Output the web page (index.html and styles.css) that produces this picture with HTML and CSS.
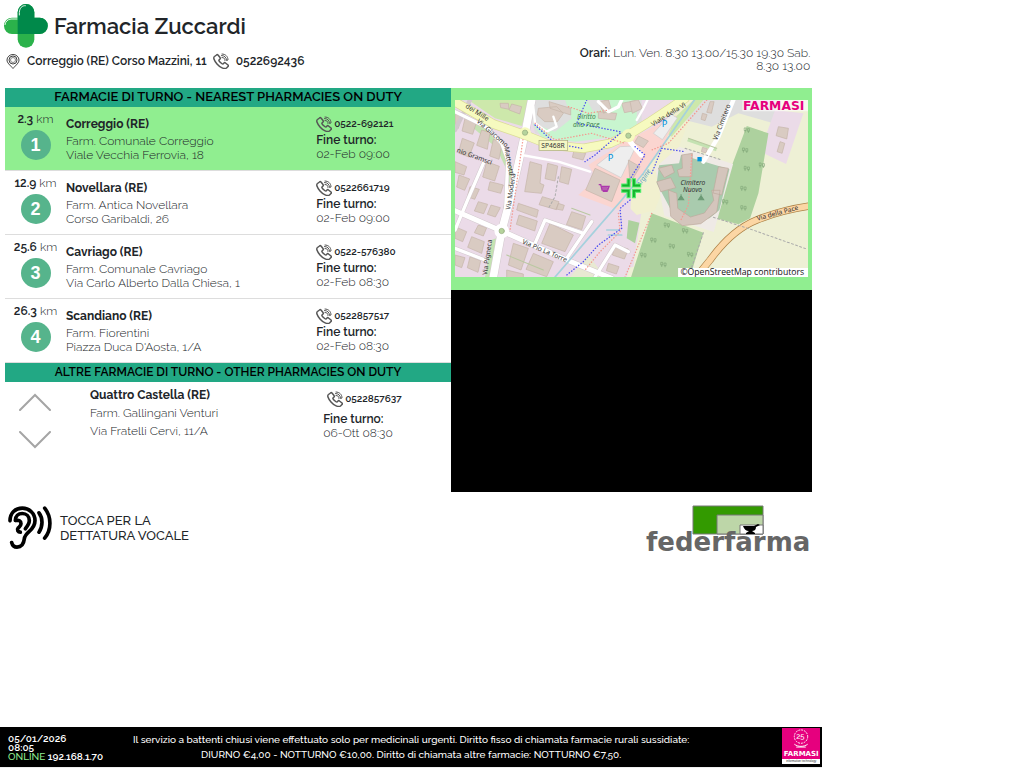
FILE: index.html
```html
<!DOCTYPE html>
<html lang="it">
<head>
<meta charset="utf-8">
<meta name="viewport" content="width=device-width, initial-scale=1">
<title>Farmacia Zuccardi</title>
<link rel="stylesheet" href="styles.css">
</head>
<body>
<svg class="defs" aria-hidden="true">
  <symbol id="phone" viewBox="0 0 32 32">
    <g fill="none" stroke="currentColor" stroke-width="3" stroke-linejoin="round" stroke-linecap="round">
      <path d="M7 4c1-1 2-1 3 0l4 5c1 1 1 2 0 3l-2 2c-1 1 1 3 3 5s4 4 5 3l2-2c1-1 2-1 3 0l5 4c1 1 1 2 0 3l-3 3c-4 3-13-1-19-8S0 9 3 7z"/>
      <path d="M18 2c7 0 12 5 12 12l-3 1c0-6-4-10-10-10M18 9c4 0 6 2 6 6" stroke-width="2"/>
    </g>
  </symbol>
  <symbol id="tree" viewBox="0 0 22 20">
    <path d="M5 18V10M2 12V4h6v8zM15 19v-7M12 14V6h6v8z" fill="none" stroke="#82a878" stroke-width="2"/>
  </symbol>
</svg>

<div class="screen">
  <header class="top">
    <div class="identity">
      <div class="brand">
        <svg class="brand-logo" viewBox="0 0 132 132" aria-hidden="true">
          <rect x="41" y="0" width="50" height="131" rx="25" fill="#2bb24b"/>
          <rect x="0" y="41" width="131" height="49" rx="24" fill="#2bb24b"/>
          <path d="M41 90V25a25 25 0 0 1 50 0v16h16a24 24 0 0 1 0 49z" fill="#00894a"/>
          <path d="M46 33V25C47 12 54 4 64 5M3 62c1-9 8-16 18-17h18" fill="none" stroke="#e9f7ec" stroke-width="3" stroke-linecap="round"/>
        </svg>
        <h1 class="brand-name">Farmacia Zuccardi</h1>
      </div>
      <div class="contact">
        <svg class="pin" viewBox="0 0 28 30" aria-hidden="true">
          <g fill="none" stroke="#444" stroke-width="2">
            <path d="M14 29C8 22 2 18 2 12a12 11 0 0 1 24 0c0 6-6 10-12 17z"/>
            <circle cx="14" cy="12" r="8"/><circle cx="14" cy="12" r="5" stroke="#888"/>
          </g>
        </svg>
        <span class="address">Correggio (RE) Corso Mazzini, 11</span>
        <svg class="contact-phone" aria-hidden="true"><use href="#phone"/></svg>
        <span>0522692436</span>
      </div>
    </div>
    <p class="hours"><b>Orari:</b> Lun. Ven. 8.30 13.00/15.30 19.30 Sab. 8.30 13.00</p>
  </header>

  <main class="board">
    <section class="duty">
      <h2 class="bar bar-main">FARMACIE DI TURNO - NEAREST PHARMACIES ON DUTY</h2>
      <ul class="list">
        <li class="row row-active">
          <div class="distance"><span><b>2.3</b> km</span><span class="badge">1</span></div>
          <div class="place"><h3>Correggio (RE)</h3><p>Farm. Comunale Correggio</p><p>Viale Vecchia Ferrovia, 18</p></div>
          <div class="shift"><div class="tel"><svg aria-hidden="true"><use href="#phone"/></svg>0522-692121</div><b>Fine turno:</b><p>02-Feb 09:00</p></div>
        </li>
        <li class="row">
          <div class="distance"><span><b>12.9</b> km</span><span class="badge">2</span></div>
          <div class="place"><h3>Novellara (RE)</h3><p>Farm. Antica Novellara</p><p>Corso Garibaldi, 26</p></div>
          <div class="shift"><div class="tel"><svg aria-hidden="true"><use href="#phone"/></svg>0522661719</div><b>Fine turno:</b><p>02-Feb 09:00</p></div>
        </li>
        <li class="row">
          <div class="distance"><span><b>25.6</b> km</span><span class="badge">3</span></div>
          <div class="place"><h3>Cavriago (RE)</h3><p>Farm. Comunale Cavriago</p><p>Via Carlo Alberto Dalla Chiesa, 1</p></div>
          <div class="shift"><div class="tel"><svg aria-hidden="true"><use href="#phone"/></svg>0522-576380</div><b>Fine turno:</b><p>02-Feb 08:30</p></div>
        </li>
        <li class="row">
          <div class="distance"><span><b>26.3</b> km</span><span class="badge">4</span></div>
          <div class="place"><h3>Scandiano (RE)</h3><p>Farm. Fiorentini</p><p>Piazza Duca D'Aosta, 1/A</p></div>
          <div class="shift"><div class="tel"><svg aria-hidden="true"><use href="#phone"/></svg>0522857517</div><b>Fine turno:</b><p>02-Feb 08:30</p></div>
        </li>
      </ul>
      <h2 class="bar">ALTRE FARMACIE DI TURNO - OTHER PHARMACIES ON DUTY</h2>
      <div class="other">
        <div class="arrows">
          <button type="button" class="arrow" aria-label="Precedente"><svg viewBox="0 0 32 18" aria-hidden="true"><path d="M1 17L16 2l15 15"/></svg></button>
          <button type="button" class="arrow" aria-label="Successiva"><svg viewBox="0 0 32 18" aria-hidden="true"><path d="M1 1l15 15L31 1"/></svg></button>
        </div>
        <div class="other-place"><h3>Quattro Castella (RE)</h3><p>Farm. Gallingani Venturi</p><p>Via Fratelli Cervi, 11/A</p></div>
        <div class="other-shift"><div class="tel"><svg aria-hidden="true"><use href="#phone"/></svg>0522857637</div><b>Fine turno:</b><p>06-Ott 08:30</p></div>
      </div>
    </section>

    <section class="media">
      <div class="map-panel">
        <svg class="map" viewBox="0 0 1059 531" preserveAspectRatio="xMidYMid slice" role="img" aria-label="Mappa">
          <rect width="1059" height="531" fill="#ebdbe8"/>
          <path d="M755 0H1059V531H420L535 500 560 330 590 200 640 130z" fill="#eef0d5"/>
          <path d="M725 0H675L530 265 525 350 600 330z" fill="#f1f0cf"/>
          <path d="M520 320L545 345 532 480 515 531H300L400 440z" fill="#ebdbe8"/>
          <path d="M345 531L400 465 450 531z" fill="#e8e9d2"/>
          <path d="M730 0H965L955 70 850 40 770 80 680 58z" fill="#dedede"/>
          <path d="M960 30L1045 40 993 192 915 155z" fill="#ebdbe8"/>
          <path d="M0 0H560V80L400 120 240 100 225 30z" fill="#dedede"/>
          <path d="M40 0H225L200 78 120 55z" fill="#cde8ab"/>
          <path d="M330 0H545V80L470 112 360 125 260 112 232 70 300 95 350 55z" fill="#c8f5cf"/>
          <path d="M395 0h70v25l-50 10z" fill="#dedede"/>
          <path d="M620 90L715 0H745L650 110z" fill="#cde8ab"/>
          <path d="M400 195L500 130 665 45 620 150 530 260 490 330 370 285 425 235z" fill="#fbd5d0"/>
          <path d="M425 195l70-55 48-2-45 95zM595 100l52-58 20 12-45 65z" fill="#eee" stroke="#ccc" stroke-width="2"/>
          <path d="M875 78L940 100 910 280 885 355 850 373 772 352zM590 340L745 398 705 531H528zM520 360l33 8-13 62-25-15z" fill="#add19e"/>
          <g fill="#c4e2b2"><path d="M70 65l65 55 35 80-5 75-14-2 3-65-30-65-70-60zM150 285l14 3-6 70-15-10zM110 420l13-5-18 116H90zM700 115l85 30-2 9-87-30z"/></g>

          <path d="M672 140l162 52-58 204-148-48-28-145z" fill="#efeae6"/>
          <path d="M612 196l60-6 6-26 145 44-30 122-30 25-78 10-40-40-40-75z" fill="#a9cbae"/>
          <g fill="#d4c5bc" stroke="#bda99b" stroke-width="2">
            <path d="M680 165l32-5-2 70-38 0-5-20 15-5zM610 205l40-10 8 22-30 16zM605 245l42-12 15 30-45 12zM790 200l30 5-20 80-26-6zM640 270l25 10 3 45 38 26 42-12 28-38-6-30h25l-10 65-48 35-55 6-35-28z"/>
          </g>

          <g fill="#d9cbc2" stroke="#c4b3a8" stroke-width="2">
            <path d="M0 40l20 5-10 40H0zM30 55l35 10-12 38-32-10zM22 115l36 14-16 42-32-12zM80 90l25 8-8 50-32-12zM115 118l27 10-10 50-28-10zM0 185l35 15-8 25-27-8zM12 225l32 12-15 34-24-10zM95 185l38 14-14 44-36-12zM45 260l28 8-14 30-22-8zM105 245l40 10-8 25-38-10z"/>
            <path d="M135 10l25 0 2 18-25-5zM170 12l30 8-6 22-32-12zM250 25l55-5 20 20-18 25-38 0-22-20zM282 5l65 20 0 20-62-20zM430 5l30-5 8 25-22 15zM430 35l55 5-5 20-50-5zM500 10l40-8v30l-32 6z"/>
            <path d="M225 185l35 10-5 55 12 5-8 25-50-5zM278 190l30 8-8 45-30-7zM320 200l30 8-10 45-27-8zM357 150l35 10-8 20-32-8zM420 205l75 35-25 65-78-35zM538 128l12-20 30 15-15 20zM520 180l35 20-30 50z"/>
            <path d="M70 305l28 8-12 28-28-8zM108 315l28 8-15 28-24-8zM0 380l35 15-12 30-23-10zM50 410l38 15-8 35-42-18zM70 375l25 8-10 25-27-10zM0 465l30 8-10 30-20-8zM45 470l32 12-8 35-32-14z"/>
            <path d="M190 310l60 20-5 22-60-22zM192 345l55 18-8 30-55-20zM175 430l45 15-22 65-38-15zM285 370l70 35-25 50-70-25zM350 335l42 14-12 40-46-15zM235 460l60 25-20 45-62-22zM310 310l18 6-5 15-20-4zM155 510l50 12v12h-50zM262 290l50 15-8 24-52-15z"/>
            <path d="M525 5l25-5 12 25-30 15zM765 5l12 0-8 35-14-3zM742 40l14 4-6 18-12-4zM970 80l30 5-5 32-32-10zM975 125l14 5-8 30-15-5zM480 435l40 12-12 30-36-12zM460 490l32 10-8 22-30-10zM742 142l15 4-4 13-14-4z"/>
          </g>

          <g fill="none" stroke-linecap="round" stroke-linejoin="round">
            <g stroke="#d2c8cd">
              <path stroke-width="26" d="M230 0L210 100 188 200 162 310 140 393 115 531"/>
              <path stroke-width="18" d="M-5 330L140 393 335 480 470 535"/>
              <path stroke-width="13" d="M0 35L95 82 140 130 158 180 152 330M85 190L42 290 0 390M240 430L270 360 385 400M410 365L335 475M0 445L90 480M45 0L0 90M420 531L480 435 520 455"/>
            </g>
            <g stroke="#fff">
              <path stroke-width="23" d="M230 0L210 100 188 200 162 310 140 393 115 531"/>
              <path stroke-width="15" d="M-5 330L140 393 335 480 470 535M525 125L558 165"/>
              <path stroke-width="10" d="M0 35L95 82 140 130 158 180 152 330M85 190L42 290 0 390M240 430L270 360 385 400M410 365L335 475M0 445L90 480M430 5l30 30 30-15 10-20M420 531L480 435 520 455"/>
              <path stroke-width="13" d="M835 0L790 110 745 185"/>
              <path stroke-width="7" d="M200 165L310 185 405 215M235 20l5 50 35 25 30-15-10-30M545 60l20-35 12-25"/>
            </g>
            <path stroke="#dadb96" stroke-width="28" d="M-5 3L115 72 210 105 285 135 385 145 465 130 520 105 585 65 690-5"/>
            <path stroke="#f6fabf" stroke-width="24" d="M-5 3L115 72 210 105 285 135 385 145 465 130 520 105 585 65 690-5"/>
            <path stroke="#ac8146" stroke-width="22" d="M720 535L765 480Q830 390 905 360T1065 318"/>
            <path stroke="#fcd6a4" stroke-width="18" d="M720 535L765 480Q830 390 905 360T1065 318"/>
            <path stroke="#a5d1dd" stroke-width="5" d="M718 0L645 105 565 220 500 300 400 415 300 531M455 390h35M460 405h40"/>
            <path stroke="#b9c8a0" stroke-width="3" d="M155 465l110 45M700 115l85 30M350 325l55 20"/>
            <g stroke="#f39a90" stroke-width="4" stroke-dasharray="1 8">
              <path d="M240 70l60 50 110-20 100 30M755 0L640 130 590 150M710 165l-10 150-25 50M490 340l5 55-60 60-45 55M590 340L510 531M205 110l-40 280M340 20l60 20 60-10"/>
            </g>
            <g stroke="#4a4cf0" stroke-width="4" stroke-dasharray="1 8">
              <path d="M240 75l60 55 80 15M395 0l-30 70 130 25M495 100l-75 65-30 20M540 140l30 25-50 80M590 220l30-75 70 10M525 300l-30 25 5 60-70 50-45 50-50 40"/>
            </g>
            <path stroke="#aaa" stroke-width="3" stroke-dasharray="6 7" d="M690 145l110 35M775 352l110 35 170 60M745 398l-45 133M310 230l-10 60-20 35"/>
            <circle cx="210" cy="100" r="18" fill="#f6fabf"/><circle cx="520" cy="107" r="20" fill="#f6fabf"/><circle cx="140" cy="393" r="22" fill="#fff"/>
            <g fill="#b5d39c" stroke="#96aa80" stroke-width="2"><circle cx="210" cy="98" r="8"/><circle cx="520" cy="107" r="8"/><circle cx="140" cy="393" r="8"/></g>
          </g>

          <g fill="none" stroke="#82a878">
            <use href="#tree" x="865" y="80" width="22" height="20"/><use href="#tree" x="860" y="140" width="22" height="20"/><use href="#tree" x="865" y="195" width="22" height="20"/><use href="#tree" x="910" y="185" width="22" height="20"/><use href="#tree" x="855" y="255" width="22" height="20"/><use href="#tree" x="800" y="295" width="22" height="20"/><use href="#tree" x="855" y="313" width="22" height="20"/><use href="#tree" x="625" y="365" width="22" height="20"/><use href="#tree" x="680" y="382" width="22" height="20"/><use href="#tree" x="585" y="410" width="22" height="20"/><use href="#tree" x="640" y="428" width="22" height="20"/><use href="#tree" x="695" y="453" width="22" height="20"/><use href="#tree" x="555" y="455" width="22" height="20"/><use href="#tree" x="615" y="483" width="22" height="20"/>
          </g>
          <path d="M678 293v-10M670 299h16l-8-12zM738 293v-10M730 299h16l-8-12z" stroke="#6b9a75" fill="#6b9a75" stroke-width="3"/>

          <g class="map-text">
            <text transform="translate(30 22) rotate(32)">dei Mille</text>
            <text transform="translate(64 66) rotate(41)">Via Giacomo</text>
            <text transform="translate(148 142) rotate(80)">Matteotti</text>
            <text transform="translate(4 156) rotate(20)">nio Gramsci</text>
            <text transform="translate(166 330) rotate(-82)">Via Modena</text>
            <text transform="translate(96 526) rotate(-82)">Via Pigneca</text>
            <text transform="translate(200 430) rotate(23)">Via Pio La Torre</text>
            <text transform="translate(594 80) rotate(-32)">Viale della Vi</text>
            <text transform="translate(786 122) rotate(-69)">Via Cimitero</text>
            <text transform="translate(907 362) rotate(-15)">Via della Pace</text>
            <g class="map-italic"><text x="366" y="56" fill="#3c8250">Diritto</text><text x="354" y="80" fill="#3c8250">alla Pace</text><text x="676" y="254">Cimitero</text><text x="684" y="276">Nuovo</text><text transform="translate(555 260) rotate(-55)" fill="#5b9cc4">Argine</text></g>
            <rect x="252" y="122" width="86" height="30" fill="#f5f7c4" stroke="#a9a97a" stroke-width="2"/>
            <text x="259" y="144">SP468R</text>
          </g>
          <g class="parking"><text x="458" y="182">P</text><text x="620" y="80">P</text></g>
          <path d="M727 171h13v13h-13z" fill="#0092da"/>
          <path d="M431 254h6l4 16h17l4-11h-22M440 264h18M443 274h15" stroke="#ac39ac" stroke-width="4" fill="none"/>

          <g fill="#16b22c" stroke="#4df06d" stroke-width="3">
            <path d="M516 236v16h-16v9h25v-25zM532 236v25h25v-9h-16v-16zM500 268v9h16v16h9v-25zM532 268v25h9v-16h16v-9z"/>
          </g>
          <path d="M862 0h197v34H862z" fill="#fff" fill-opacity=".6"/>
          <text class="map-brand" x="864" y="30">FARMASI</text>
          <path d="M669 504h390v27H669z" fill="#fff"/>
          <text class="map-credit" x="676" y="525">©OpenStreetMap contributors</text>
        </svg>
      </div>
      <div class="video"></div>
    </section>
  </main>

  <div class="tools">
    <button type="button" class="voice">
      <svg class="ear" viewBox="0 0 132 128" aria-hidden="true">
        <g fill="none" stroke="#000" stroke-width="11" stroke-linecap="round">
          <path d="M6 44C6 20 22 6 43 6s38 16 38 37c0 32-29 31-32 55-2 18-12 25-22 25-9 0-14-6-16-14"/>
          <path d="M22 43c0-14 9-21 21-21s21 9 21 21c0 10-5 16-12 25"/>
          <path d="M24 43c8-2 15 1 15 10 0 7-6 9-9 13-4 5 0 12 7 12"/>
          <path d="M93 20c12 16 12 40 0 58M110 6c21 26 21 64 0 90"/>
        </g>
      </svg>
      <span>TOCCA PER LA<br>DETTATURA VOCALE</span>
    </button>
    <div class="feder">
      <svg viewBox="0 0 72 30" aria-hidden="true">
        <path d="M1 1h70v28H1z" fill="#339a00" stroke="#777"/>
        <path d="M25 10h46v19H25z" fill="#bdd6a8" stroke="#777"/>
        <path d="M48 20h23v9H48z" fill="#fff" stroke="#777"/>
        <path d="M51 21h11l4-2 2 1-4 2c0 3-2 4-4 4l3 2v1h-9v-1l3-2c-3 0-5-2-6-5z"/>
      </svg>
      <span>federfarma</span>
    </div>
  </div>

  <footer class="footer">
    <div class="status"><div>05/01/2026</div><div>08:05</div><div><span class="online">ONLINE</span> 192.168.1.70</div></div>
    <p class="notice">Il servizio a battenti chiusi viene effettuato solo per medicinali urgenti. Diritto fisso di chiamata farmacie rurali sussidiate:<br>DIURNO €4,00 - NOTTURNO €10,00. Diritto di chiamata altre farmacie: NOTTURNO €7,50.</p>
    <div class="maker">
      <svg viewBox="0 0 38 22" aria-hidden="true"><g fill="none" stroke="#fff"><circle cx="19" cy="9" r="7" stroke-dasharray="2 1"/><path d="M12 17c4 3 10 3 14 0M14 20h10"/></g><text x="14" y="12" font-size="8" fill="#fff">25</text></svg>
      <strong>FARMASI</strong>
      <small>information technology</small>
    </div>
  </footer>
</div>
</body>
</html>
```
FILE: styles.css
```css
* { box-sizing: border-box; }
body, h1, h2, h3, p, ul { margin: 0; padding: 0; }
body { background: #fff; color: #212529; font-family: Raleway, Lato, sans-serif; font-size: 12px; line-height: 14px; }
b { font-weight: 600; color: #212529; }
button { border: 0; background: none; padding: 0; font: inherit; color: inherit; cursor: pointer; }
.defs { position: absolute; width: 0; height: 0; }

.screen { width: 80.3%; min-height: 100vh; display: flex; flex-direction: column; border-bottom: 1px solid #eee; }

.top { display: flex; justify-content: space-between; height: 88px; padding: 4px 12px 0 4px; }
.brand { display: flex; align-items: center; gap: 6px; }
.brand-logo { width: 44px; height: 44px; }
.brand-name { font-size: 22px; line-height: 32px; font-weight: 600; }
.contact { display: flex; align-items: center; font-weight: 600; padding: 5px 0 0 2px; }
.pin { width: 14px; height: 15px; }
.address { margin: 0 6px 0 7px; }
.contact-phone { width: 16px; height: 16px; margin-right: 7px; color: #555; }
.hours { width: 240px; padding-top: 43px; text-align: right; line-height: 13px; font-weight: 300; }

.board { display: grid; grid-template-columns: 446fr 361fr; margin: 0 10px 0 5px; }
.bar { height: 19px; background: #22a884; color: #000; text-align: center; font-size: 12px; line-height: 18px; font-weight: 600; }
.bar-main { font-size: 13px; }
.list { list-style: none; }
.row { display: grid; grid-template-columns: 61px 1fr 135px; height: 64px; border-bottom: 1px solid #ddd; font-weight: 300; }
.row-active { background: #90ee90; }
.distance { display: flex; flex-direction: column; align-items: center; padding-top: 5px; gap: 4px; }
.badge { width: 30px; height: 30px; border-radius: 50%; background: #56b48c; color: #fff; font: bold 18px/30px "Liberation Sans", sans-serif; text-align: center; }
.place { padding-top: 9px; }
.place h3, .other h3 { font-size: 12px; line-height: 16px; font-weight: 700; }
.place h3 { margin-bottom: 2px; }
.shift { padding-top: 9px; }
.tel { display: flex; align-items: center; gap: 2px; height: 16px; margin-bottom: 1px; font-size: 10px; font-weight: 600; }
.tel svg { width: 16px; height: 16px; color: #555; }
.other { display: grid; grid-template-columns: 85px 1fr 128px; font-weight: 300; }
.arrows { display: flex; flex-direction: column; gap: 20px; padding: 11px 0 0 14px; }
.arrow { width: 32px; height: 18px; }
.arrow svg { display: block; fill: none; stroke: #a5a5a5; stroke-width: 2; stroke-linecap: round; }
.other-place { padding-top: 5px; line-height: 18px; }
.other-place h3 { margin-bottom: 1px; }
.other-shift { padding-top: 9px; }
.other-shift .tel { margin: 0 0 5px 4px; }

.media { display: grid; grid-template-rows: 1fr 1fr; min-height: 404px; }
.map-panel { background: #90ee90; padding: 12px 4px 13px; }
.map { display: block; width: 100%; height: 177px; }
.map-text { font-family: "Noto Sans", sans-serif; font-size: 20px; fill: #333; stroke: none; }
.map-italic { font-style: italic; }
.parking { font: 28px "Noto Sans", sans-serif; fill: #0092da; }
.map-brand { font: bold 37px "DejaVu Sans", sans-serif; fill: #e6007e; }
.map-credit { font: 26px "Open Sans", sans-serif; fill: #111; }
.video { background: #000; }

.tools { display: flex; justify-content: space-between; align-items: flex-start; padding: 13px 12px 0 8px; }
.voice { display: flex; align-items: center; gap: 8px; padding-top: 1px; text-align: left; font-size: 13px; font-weight: 500; line-height: 15px; }
.ear { width: 44px; height: 43px; }
.feder { display: flex; flex-direction: column; align-items: center; color: #666; font: bold 26px/14px "DejaVu Sans", sans-serif; }
.feder svg { width: 72px; height: 30px; }

.footer { position: relative; margin-top: auto; height: 40px; display: flex; align-items: center; background: #000; color: #fff; font-size: 10px; font-weight: 500; }
.status { width: 132px; padding-left: 8px; line-height: 9px; font-weight: 600; }
.online { color: #90ee90; font-weight: 500; }
.notice { flex: 1; text-align: center; line-height: 15px; padding-right: 132px; white-space: nowrap; }
.maker { position: absolute; right: 2px; top: 1px; width: 38px; height: 36px; background: #e6007e; display: flex; flex-direction: column; align-items: center; overflow: hidden; }
.maker svg { width: 38px; height: 21px; flex: none; }
.maker strong { font: bold 7px/10px "DejaVu Sans", sans-serif; }
.maker small { width: 38px; background: #fff; color: #333; font: 3px/5px "Liberation Sans", sans-serif; text-align: center; white-space: nowrap; }
```
